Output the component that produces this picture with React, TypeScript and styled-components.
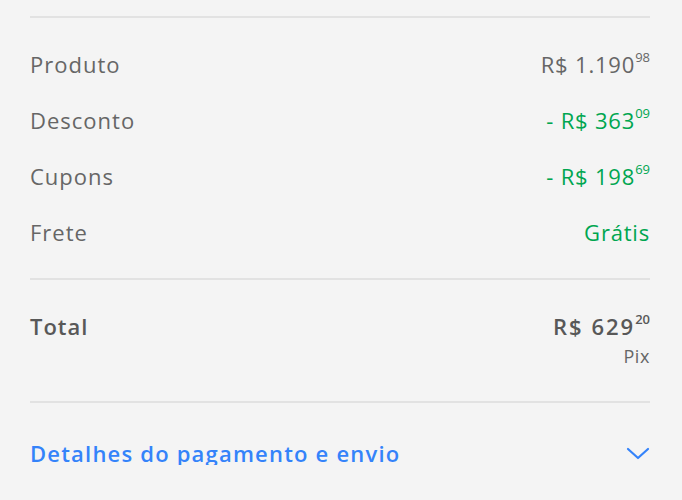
import React from "react";
import styled, { createGlobalStyle } from "styled-components";

const GlobalStyle = createGlobalStyle`
  html, body {
    margin: 0;
    padding: 0;
    background: #f4f4f4;
  }
  body {
    font-family: "Open Sans", "Liberation Sans", sans-serif;
    -webkit-font-smoothing: antialiased;
  }
`;

const Summary = styled.section`
  padding: 16px 32px 0 30px;
  width: 620px;
`;

const Divider = styled.hr`
  border: none;
  border-top: 2px solid #e2e2e2;
  margin: 0;
`;

const Lines = styled.div`
  display: flex;
  flex-direction: column;
  gap: 32px;
  padding: 34px 0 34px;
`;

const Row = styled.div`
  display: flex;
  justify-content: space-between;
  align-items: flex-start;
  font-size: 22px;
  line-height: 24px;
  letter-spacing: 1px;
`;

const Label = styled.span<{ strong?: boolean }>`
  color: ${(p) => (p.strong ? "#585858" : "#666")};
  font-weight: ${(p) => (p.strong ? 600 : 400)};
`;

const Value = styled.span<{ tone?: "green" | "gray"; strong?: boolean }>`
  color: ${(p) => (p.tone === "green" ? "#00a650" : p.strong ? "#585858" : "#666")};
  font-weight: ${(p) => (p.strong ? 600 : 400)};
  letter-spacing: ${(p) => (p.strong ? "2px" : "0.8px")};
  white-space: nowrap;
`;

const Cents = styled.sup`
  font-size: 13px;
  line-height: 0;
  vertical-align: 11px;
  letter-spacing: 0;
`;

const TotalBlock = styled.div`
  padding: 34px 0 35px;
`;

const TotalRight = styled.div`
  display: flex;
  flex-direction: column;
  align-items: flex-end;
  gap: 8px;
`;

const Method = styled.span`
  font-size: 18px;
  line-height: 20px;
  letter-spacing: 0.6px;
  font-weight: 400;
  color: #666;
`;

const Details = styled.button`
  display: flex;
  align-items: center;
  justify-content: space-between;
  width: 100%;
  padding: 38px 0 0;
  border: none;
  background: none;
  cursor: pointer;
  font-family: inherit;
  font-size: 22px;
  line-height: 24px;
  letter-spacing: 1.2px;
  font-weight: 600;
  color: #3483fa;
`;

const Chevron = () => (
  <svg width="24" height="14" viewBox="0 0 24 14" fill="none">
    <path d="M2 3 L12 12 L22 3" stroke="#3483fa" strokeWidth="2.2" strokeLinecap="round" strokeLinejoin="round" />
  </svg>
);

const Price = ({ whole, cents, prefix = "" }: { whole: string; cents: string; prefix?: string }) => (
  <>
    {prefix}R$ {whole}
    <Cents>{cents}</Cents>
  </>
);

const lines = [
  { label: "Produto", whole: "1.190", cents: "98", tone: "gray" as const, prefix: "" },
  { label: "Desconto", whole: "363", cents: "09", tone: "green" as const, prefix: "- " },
  { label: "Cupons", whole: "198", cents: "69", tone: "green" as const, prefix: "- " },
];

export default function App() {
  return (
    <>
      <GlobalStyle />
      <Summary>
        <Divider />
        <Lines>
          {lines.map((l) => (
            <Row key={l.label}>
              <Label>{l.label}</Label>
              <Value tone={l.tone}>
                <Price whole={l.whole} cents={l.cents} prefix={l.prefix} />
              </Value>
            </Row>
          ))}
          <Row>
            <Label>Frete</Label>
            <Value tone="green">Grátis</Value>
          </Row>
        </Lines>
        <Divider />
        <TotalBlock>
          <Row>
            <Label strong>Total</Label>
            <TotalRight>
              <Value strong>
                <Price whole="629" cents="20" />
              </Value>
              <Method>Pix</Method>
            </TotalRight>
          </Row>
        </TotalBlock>
        <Divider />
        <Details>
          Detalhes do pagamento e envio
          <Chevron />
        </Details>
      </Summary>
    </>
  );
}
